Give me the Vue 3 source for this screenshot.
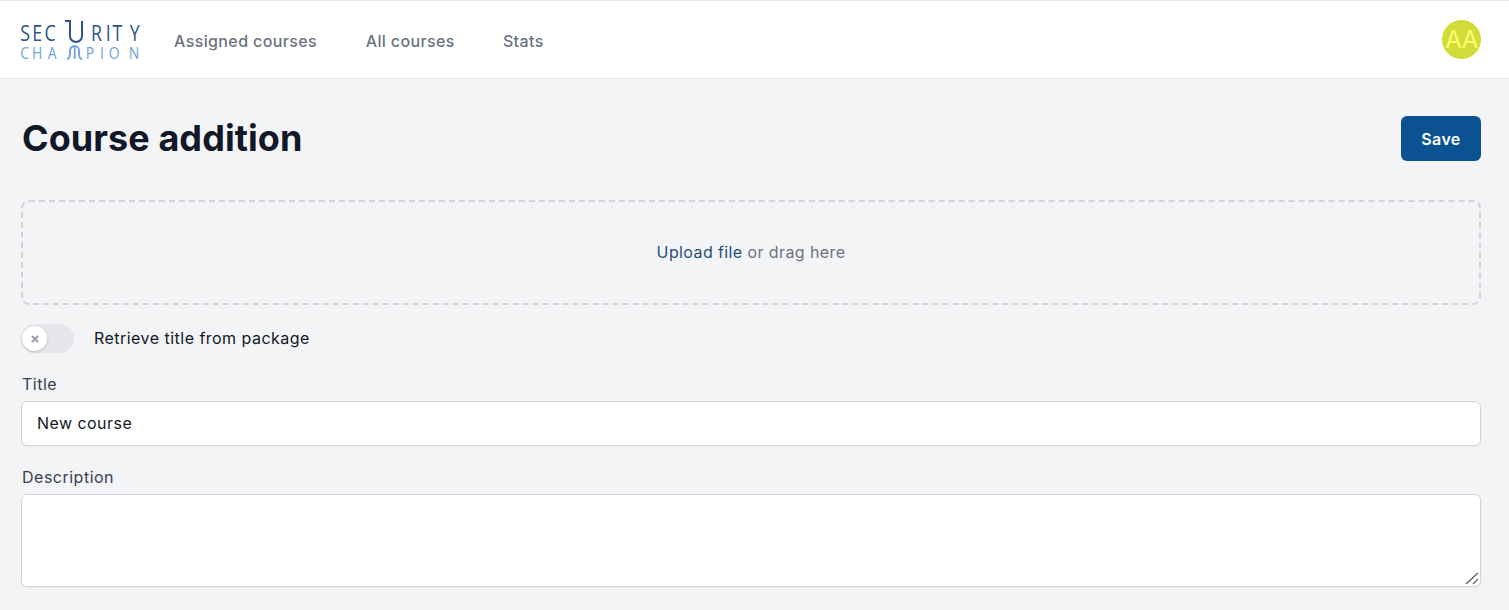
<script setup>
const links = ['Assigned courses', 'All courses', 'Stats']
</script>

<template>
  <div class="page">
    <header class="nav">
      <svg class="logo" width="122" height="50" viewBox="0 -4 122 50">
        <g transform="scale(.85 1)">
          <text class="sec" x="0.300 14.500 28.800" y="21">SEC</text>
          <text class="sec" x="83.500 101 108.800 129.200" y="21">RITY</text>
        </g>
        <path d="M45 1h5v15a6 6 0 0 0 12 0V1" fill="none" stroke="#2b5586" stroke-width="2"/>
        <g transform="scale(.85 1)">
          <text class="cha" x="0.200 14 32.700" y="39">CHA</text>
          <text class="cha" x="77.500 94 104.500 128" y="39">PION</text>
        </g>
        <path d="M47 39c2.600 0 3-2 3-6v-2.500a4.500 4.500 0 0 1 4.700-4.500 4.500 4.500 0 0 1 4.300 4.500V33c0 4 .4 6 3 6M54.700 26v13" fill="none" stroke="#6fa5d7" stroke-width="1.900"/>
      </svg>
      <nav class="links">
        <a v-for="l in links" :key="l" class="link">{{ l }}</a>
      </nav>
      <div class="avatar">AA</div>
    </header>

    <main class="content">
      <div class="head">
        <h1>Course addition</h1>
        <button class="save">Save</button>
      </div>

      <div class="drop"><span class="up">Upload file</span>&nbsp;or drag here</div>

      <div class="toggle-row">
        <span class="toggle">
          <span class="knob">
            <svg width="10" height="10" viewBox="0 0 10 10"><path d="M2 2l6 6M8 2l-6 6" stroke="#9ca3af" stroke-width="2.400"/></svg>
          </span>
        </span>
        <span class="toggle-label">Retrieve title from package</span>
      </div>

      <label class="label first">Title</label>
      <input class="input" value="New course" />
      <label class="label second">Description</label>
      <div class="area-wrap">
        <textarea class="area"></textarea>
        <svg class="grip" width="16" height="16" viewBox="0 0 16 16"><path d="M2 14L14 3M9 14l5-5" fill="none" stroke="#666" stroke-width="1.400"/></svg>
      </div>
    </main>
  </div>
</template>

<style>
html, body { margin: 0; background: #f3f4f6; overflow: hidden; }
</style>

<style scoped>
.page { font-family: Inter, "Liberation Sans", sans-serif; height: 610px; background: #f3f4f6; overflow: hidden; }
.nav { box-sizing: border-box; height: 79px; display: flex; align-items: center; background: #fff; border-top: 1px solid #e5e7eb; border-bottom: 1px solid #e5e7eb; padding: 0 28px 0 20px; }
.logo { flex: none; margin-top: 3px; }
.sec { font: 500 21px "Open Sans", sans-serif; fill: #2b5586; }
.cha { font: 500 16.500px "Open Sans", sans-serif; fill: #6fa5d7; }
.links { display: flex; gap: 48px; margin-left: 32px; flex: 1; padding-top: 2px; }
.link { font-size: 16px; font-weight: 500; color: #6b7280; line-height: 24px; letter-spacing: .38px; }
.link:first-child { margin-right: .6px; }
.avatar { width: 39px; height: 39px; border-radius: 50%; background: #d0dc37; color: #fdfd72; font-size: 24px; display: flex; align-items: center; justify-content: center; letter-spacing: -0.5px; }
.content { padding: 0 28px 0 21px; }
.head { display: flex; justify-content: space-between; align-items: center; height: 45px; margin-top: 37px; }
h1 { margin: 0 0 2px 1px; font-size: 36px; line-height: 40px; font-weight: 700; color: #111827; letter-spacing: .07px; }
.save { width: 80px; height: 45px; border: 0; border-radius: 6px; background: #0a5291; color: #fff; font: 600 16px Inter, sans-serif; letter-spacing: .4px; padding: 0; }
.drop { box-sizing: border-box; height: 105px; margin-top: 39px; padding-bottom: 2px; border: 2px dashed #d1d5db; border-radius: 8px; display: flex; align-items: center; justify-content: center; font-size: 16px; color: #6b7280; letter-spacing: .4px; }
.up { color: #1f4e79; }
.toggle-row { display: flex; align-items: center; margin-top: 19px; height: 29px; }
.toggle { width: 53px; height: 29px; border-radius: 15px; background: #e5e7eb; display: flex; align-items: center; padding-left: 1px; box-sizing: border-box; }
.knob { width: 25px; height: 25px; border-radius: 50%; background: #fff; box-shadow: 0 1px 3px rgba(0,0,0,.2); display: flex; align-items: center; justify-content: center; }
.toggle-label { margin-left: 20px; padding-bottom: 2px; font-size: 16px; color: #111827; letter-spacing: .47px; }
.label { display: block; font-size: 16px; line-height: 20px; color: #374151; margin-left: 1px; letter-spacing: .5px; }
.first { margin-top: 21px; }
.second { margin-top: 21px; }
.input, .area { display: block; box-sizing: border-box; width: 100%; background: #fff; border: 1px solid #d1d5db; border-radius: 6px; font: 400 16px Inter, sans-serif; color: #111827; padding: 0 15px 2px; outline: none; box-shadow: 0 1px 2px rgba(0,0,0,.05); letter-spacing: .45px; }
.input { height: 45px; margin: 7px 0 0; }
.area-wrap { position: relative; margin-top: 7px; }
.area { height: 93px; resize: none; }
.grip { position: absolute; right: 1px; bottom: 1px; }
</style>
